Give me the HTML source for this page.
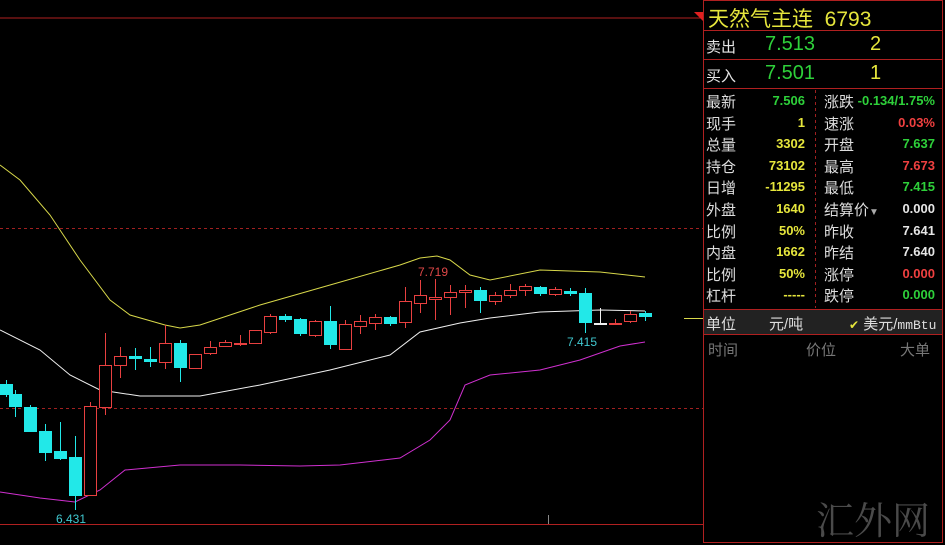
<!DOCTYPE html>
<html><head><meta charset="utf-8"><style>
body{margin:0;width:945px;height:543px;background:#000;overflow:hidden;position:relative;font-family:"Liberation Sans","Noto Sans CJK SC",sans-serif}
.a{position:absolute;white-space:nowrap}
.l{font-size:15px;color:#ddd}
.v{font-size:13px;font-weight:bold;text-align:right}
.y{color:#e6e63c}.g{color:#2ed03a}.r{color:#f04040}.w{color:#e6e6e6}
</style></head><body>
<svg id="c" width="945" height="543" style="position:absolute;left:0;top:0">
<line x1="0" y1="18" x2="703" y2="18" stroke="#b02020"/>
<line x1="0" y1="524.5" x2="703" y2="524.5" stroke="#b02020"/>
<line x1="0" y1="228.5" x2="703" y2="228.5" stroke="#a02020" stroke-dasharray="3,3"/>
<line x1="0" y1="408.5" x2="703" y2="408.5" stroke="#a02020" stroke-dasharray="3,3"/>
<line x1="548.5" y1="515" x2="548.5" y2="524" stroke="#888"/>
<polyline fill="none" stroke="#d8d84a" points="0,165 20,180 50,215 80,260 110,300 130,315 165,325 180,328 200,325 260,305 330,285 400,265 420,258 437,256 450,260 470,275 490,280 540,270 600,272 645,277"/>
<polyline fill="none" stroke="#f0f0f0" points="0,330 40,350 70,375 100,390 140,396 200,396 260,385 330,370 390,355 420,332 460,323 490,318 540,312 600,310 645,311"/>
<polyline fill="none" stroke="#d030d0" points="0,492 40,498 75,502 100,490 125,470 180,465 240,465 300,466 340,465 400,458 430,440 450,420 465,385 490,375 540,370 580,360 620,346 645,342"/>
<line x1="684" y1="318.5" x2="703" y2="318.5" stroke="#d8d84a"/>
<g id="k"></g>
<text x="56" y="523" fill="#40c8d0" font-size="12" font-family="Liberation Sans">6.431</text>
<text x="418" y="276" fill="#e04848" font-size="12" font-family="Liberation Sans">7.719</text>
<text x="567" y="346" fill="#40c8d0" font-size="12" font-family="Liberation Sans">7.415</text>
<rect x="703.5" y="0.5" width="239" height="542" fill="none" stroke="#b02020"/>
<polygon points="694,12 703,12 703,21" fill="#e02020"/>
<line x1="704" y1="30.5" x2="942" y2="30.5" stroke="#b02020"/>
<line x1="704" y1="59.5" x2="942" y2="59.5" stroke="#b02020"/>
<line x1="704" y1="88.5" x2="942" y2="88.5" stroke="#b02020"/>
<line x1="815.5" y1="90" x2="815.5" y2="308" stroke="#a02020" stroke-dasharray="3,3"/>
<rect x="704" y="310" width="238" height="24" fill="#222"/>
<line x1="704" y1="309.5" x2="942" y2="309.5" stroke="#b02020"/>
<line x1="704" y1="334.5" x2="942" y2="334.5" stroke="#b02020"/>
</svg>
<script>
var d=[[0,'c',384,395,380,397],[9,'c',394,407,390,417],[24,'c',407,432,405,432],[39,'c',431,453,424,461],[54,'c',451,459,422,460],[69,'c',457,496,436,510],[84,'r',406,495,402,495],[99,'r',365,407,333,415],[114,'r',356,365,347,378],[129,'c',356,359,348,370],[144,'c',359,362,347,367],[159,'r',343,362,325,369],[174,'c',343,368,340,382],[189,'r',354,368,354,368],[204,'r',347,353,341,355],[219,'r',342,346,340,347],[234,'r',343,344,335,346],[249,'r',330,343,330,343],[264,'r',316,332,314,334],[279,'c',316,320,314,322],[294,'c',319,334,318,336],[309,'r',321,335,320,337],[324,'c',321,345,306,349],[339,'r',324,349,320,350],[354,'r',321,326,315,334],[369,'r',317,323,314,330],[384,'c',317,324,316,326],[399,'r',301,322,287,328],[414,'r',295,303,280,313],[429,'r',297,299,279,320],[444,'r',292,297,285,315],[459,'r',290,292,285,308],[474,'c',290,301,287,313],[489,'r',295,301,292,305],[504,'r',290,295,284,298],[519,'r',286,290,284,296],[534,'c',287,294,286,296],[549,'r',289,294,287,296],[564,'c',291,294,288,296],[579,'c',293,323,288,333],[594,'w',323,324,308,323],[609,'r',323,324,319,324],[624,'r',314,321,311,323],[639,'c',313,317,311,321]];
var s='';d.forEach(function(e){var x=e[0],cx=x+6.5,col=e[1]=='c'?'#22e8e8':e[1]=='r'?'#e84040':'#f0f0f0';
s+='<line x1="'+cx+'" y1="'+e[4]+'" x2="'+cx+'" y2="'+e[5]+'" stroke="'+col+'"/>';
var h=Math.max(e[3]-e[2],1);
if(e[1]=='c')s+='<rect x="'+x+'" y="'+e[2]+'" width="13" height="'+h+'" fill="'+col+'"/>';
else if(h<=1)s+='<rect x="'+x+'" y="'+e[2]+'" width="13" height="2" fill="'+col+'"/>';
else s+='<rect x="'+(x+0.5)+'" y="'+(e[2]+0.5)+'" width="12" height="'+h+'" fill="#000" stroke="'+col+'"/>';});
document.getElementById('k').innerHTML=s;
</script>
<div class="a y" style="left:708px;top:3px;font-size:21px">天然气主连&nbsp;&nbsp;6793</div>
<div class="a w" style="left:706px;top:36px;font-size:15px">卖出</div>
<div class="a g" style="left:765px;top:33px;font-size:20px">7.513</div>
<div class="a y" style="left:870px;top:33px;font-size:20px">2</div>
<div class="a w" style="left:706px;top:65px;font-size:15px">买入</div>
<div class="a g" style="left:765px;top:62px;font-size:20px">7.501</div>
<div class="a y" style="left:870px;top:62px;font-size:20px">1</div>
<div id="rows"></div>
<script>
var L=[['最新','7.506','g','涨跌','-0.134/1.75%','g'],['现手','1','y','速涨','0.03%','r'],['总量','3302','y','开盘','7.637','g'],['持仓','73102','y','最高','7.673','r'],['日增','-11295','y','最低','7.415','g'],['外盘','1640','y','结算价<span style="font-size:10px;color:#aaa">▼</span>','0.000','w'],['比例','50%','y','昨收','7.641','w'],['内盘','1662','y','昨结','7.640','w'],['比例','50%','y','涨停','0.000','r'],['杠杆','-----','y','跌停','0.000','g']];
var h='';L.forEach(function(r,i){var t=91+i*21.6;
h+='<div class="a l" style="left:706px;top:'+t+'px">'+r[0]+'</div><div class="a v '+r[2]+'" style="right:140px;top:'+(t+2)+'px">'+r[1]+'</div><div class="a l" style="left:824px;top:'+t+'px">'+r[3]+'</div><div class="a v '+r[5]+'" style="right:10px;top:'+(t+2)+'px">'+r[4]+'</div>';});
document.getElementById('rows').innerHTML=h;
</script>
<div class="a l" style="left:706px;top:313px">单位</div>
<div class="a l" style="left:769px;top:313px">元/吨</div>
<div class="a" style="left:849px;top:313px;font-size:15px;color:#ddd"><span class="y" style="font-size:12px">✔</span> 美元/<span style="font-family:'Liberation Mono';font-size:13px">mmBtu</span></div>
<div class="a" style="left:708px;top:339px;font-size:15px;color:#777">时间</div>
<div class="a" style="left:806px;top:339px;font-size:15px;color:#777">价位</div>
<div class="a" style="left:900px;top:339px;font-size:15px;color:#777">大单</div>
<div class="a" style="left:816px;top:490px;font-size:38px;color:#4a4a4a;font-family:'Liberation Serif','Noto Serif CJK SC',serif">汇外网</div>
</body></html>
